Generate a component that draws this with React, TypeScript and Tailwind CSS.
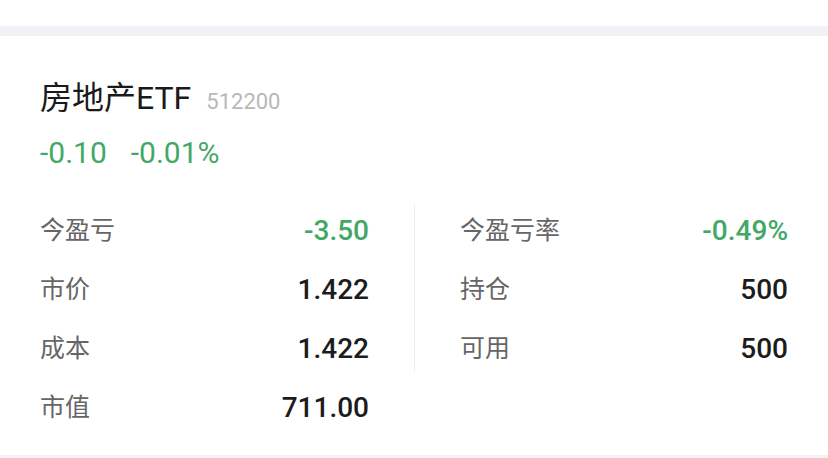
import React from "react";

const left = [
  { label: "今盈亏", value: "-3.50", green: true },
  { label: "市价", value: "1.422" },
  { label: "成本", value: "1.422" },
  { label: "市值", value: "711.00" },
];

const right = [
  { label: "今盈亏率", value: "-0.49%", green: true },
  { label: "持仓", value: "500" },
  { label: "可用", value: "500" },
];

function Row({ label, value, green }: { label: string; value: string; green?: boolean }) {
  return (
    <div className="flex h-[59px] items-center justify-between">
      <span className="text-[25px] text-[#666666]">{label}</span>
      <span className={`text-[28px] font-medium ${green ? "text-[#43a866]" : "text-[#1c1c1c]"}`}>{value}</span>
    </div>
  );
}

export default function App() {
  return (
    <div className="min-h-[458px] bg-white font-['Roboto','Noto_Sans_CJK_SC',sans-serif]">
      <div className="h-[26px] bg-white" />
      <div className="h-[10px] bg-[#f2f2f6]" />
      <div className="h-[419px] bg-white pt-[43px]">
        {/* header */}
        <div className="px-[40px]">
          <div className="flex items-baseline leading-[38px]">
            <span className="text-[32px] text-[#1a1a1a]">房地产ETF</span>
            <span className="ml-[15px] text-[22px] text-[#b8b8b8]">512200</span>
          </div>
          <div className="mt-[14px] flex gap-[24px] text-[30px] leading-[36px] text-[#43a866]">
            <span>-0.10</span>
            <span>-0.01%</span>
          </div>
        </div>

        {/* stats */}
        <div className="mt-[30px] flex px-[40px]">
          <div className="w-[329px]">
            {left.map((r) => (
              <Row key={r.label} {...r} />
            ))}
          </div>
          <div className="ml-[45px] mt-[3px] h-[168px] w-px bg-[#ececec]" />
          <div className="ml-[45px] flex-1">
            {right.map((r) => (
              <Row key={r.label} {...r} />
            ))}
          </div>
        </div>
      </div>
      <div className="h-[3px] bg-[#f2f2f6]" />
    </div>
  );
}
